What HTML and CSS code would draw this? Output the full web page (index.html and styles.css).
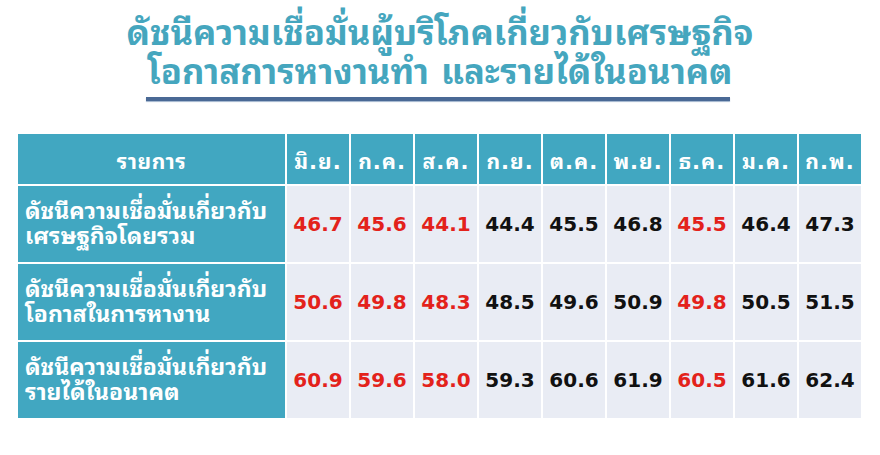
FILE: index.html
```html
<!DOCTYPE html>
<html lang="th">
<head>
<meta charset="utf-8">
<title>ดัชนีความเชื่อมั่นผู้บริโภค</title>
<link rel="stylesheet" href="styles.css">
</head>
<body>
<div class="slide">
  <header class="title">
    <h1>ดัชนีความเชื่อมั่นผู้บริโภคเกี่ยวกับเศรษฐกิจ<br>โอกาสการหางานทำ และรายได้ในอนาคต</h1>
    <div class="rule"></div>
  </header>
  <table class="data">
    <thead>
      <tr>
        <th class="item">รายการ</th>
        <th>มิ.ย.</th><th>ก.ค.</th><th>ส.ค.</th><th>ก.ย.</th><th>ต.ค.</th><th>พ.ย.</th><th>ธ.ค.</th><th>ม.ค.</th><th>ก.พ.</th>
      </tr>
    </thead>
    <tbody>
      <tr>
        <th class="label">ดัชนีความเชื่อมั่นเกี่ยวกับ<br>เศรษฐกิจโดยรวม</th>
        <td class="red">46.7</td><td class="red">45.6</td><td class="red">44.1</td><td>44.4</td><td>45.5</td><td>46.8</td><td class="red">45.5</td><td>46.4</td><td>47.3</td>
      </tr>
      <tr>
        <th class="label">ดัชนีความเชื่อมั่นเกี่ยวกับ<br>โอกาสในการหางาน</th>
        <td class="red">50.6</td><td class="red">49.8</td><td class="red">48.3</td><td>48.5</td><td>49.6</td><td>50.9</td><td class="red">49.8</td><td>50.5</td><td>51.5</td>
      </tr>
      <tr>
        <th class="label">ดัชนีความเชื่อมั่นเกี่ยวกับ<br>รายได้ในอนาคต</th>
        <td class="red">60.9</td><td class="red">59.6</td><td class="red">58.0</td><td>59.3</td><td>60.6</td><td>61.9</td><td class="red">60.5</td><td>61.6</td><td>62.4</td>
      </tr>
    </tbody>
  </table>
</div>
</body>
</html>
```
FILE: styles.css
```css
html, body {
  margin: 0;
  padding: 0;
  background: #ffffff;
}
body {
  font-family: "DejaVu Sans", "Noto Sans Thai Looped", "Loma", "Garuda", "Noto Sans", sans-serif;
}
.slide {
  width: 880px;
  height: 455px;
  padding-top: 14px;
  box-sizing: border-box;
}
.title {
  display: flex;
  flex-direction: column;
  align-items: center;
}
.title h1 {
  margin: 0;
  font-size: 34.6px;
  line-height: 39px;
  font-weight: bold;
  color: #45a6be;
  text-align: center;
}
.rule {
  width: 584px;
  height: 4px;
  margin-top: 5px;
  margin-left: -4px;
  background: #4a6995;
  box-shadow: 0 1px 1px #9fb3cc;
}
.data {
  margin: 31px 0 0 16px;
  border-collapse: collapse;
  table-layout: fixed;
  width: 847px;
}
.data th, .data td {
  border: 2px solid #ffffff;
  padding: 0;
}
.data thead tr {
  height: 52px;
}
.data thead th {
  background: #41a7c1;
  color: #ffffff;
  font-size: 21px;
  font-weight: bold;
  text-align: center;
  letter-spacing: 1px;
}
.data thead th.item {
  width: 267px;
  letter-spacing: 0.5px;
}
.data tbody tr {
  height: 78px;
}
.data th.label {
  background: #41a7c1;
  color: #ffffff;
  font-size: 23px;
  line-height: 25px;
  font-weight: bold;
  text-align: left;
  padding-left: 7px;
}
.data td {
  background: #e9ecf4;
  color: #111111;
  font-size: 20px;
  font-weight: bold;
  text-align: center;
}
.data td.red {
  color: #e3221b;
}
```
